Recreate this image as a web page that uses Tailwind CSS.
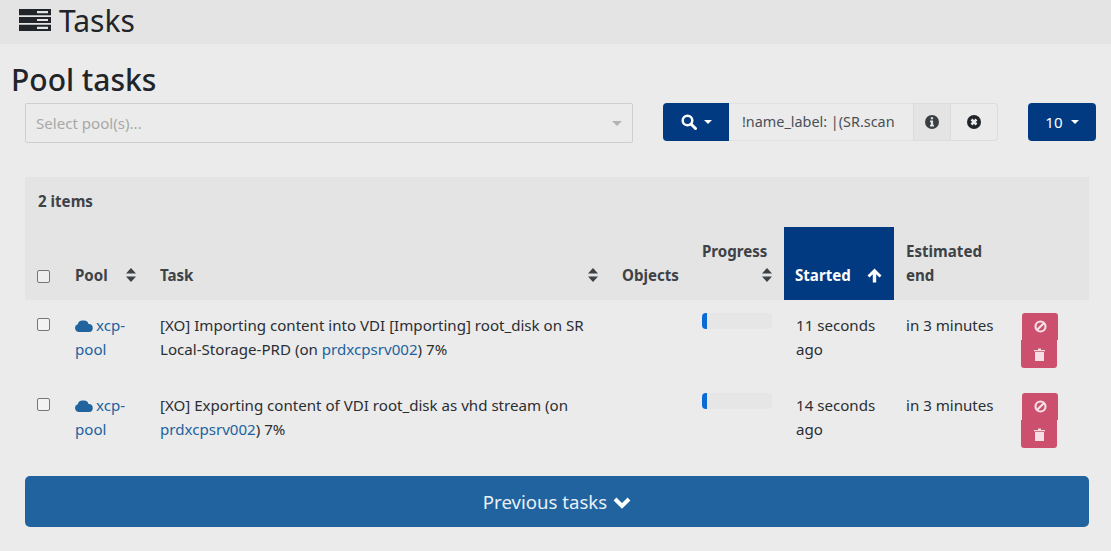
<!DOCTYPE html>
<html lang="en">
<head>
<meta charset="utf-8">
<title>Tasks</title>
<script src="https://cdn.jsdelivr.net/npm/@tailwindcss/browser@4"></script>
</head>
<body class="w-[1111px] h-[551px] overflow-hidden bg-[#ebebeb] text-[#2a2e33] font-['Noto_Sans','Open_Sans',sans-serif] text-[15.1px] leading-[24px]">

<!-- Page header -->
<header class="h-[44px] bg-[#e4e4e4] flex items-center pl-[19px] gap-[8px]">
    <svg class="w-[32px] h-[22px] -mt-[4px]" viewBox="0 0 32 22" fill="#212529">
        <path d="M0 0h32v6.200H0zM0 7.900h32v6.200H0zM0 15.800h32v6.200H0z"/>
        <path fill="#e4e4e4" d="M18 2h11v2.200H18zM18 9.900h11v2.200H18zM18 17.800h11v2.200H18z"/>
    </svg>
    <h1 class="text-[30px] leading-[40px] -mt-[3px] text-[#212529]">Tasks</h1>
</header>

<main class="px-[11px]">
    <h2 class="text-[30px] leading-[40px] mt-[16px] font-medium text-[#212529]">Pool tasks</h2>

    <!-- Filters -->
    <div class="flex items-start mt-[3px] ml-[14px]">
        <div class="w-[608px] h-[40px] border border-[#cfcfcf] rounded-[2px] flex items-center justify-between pl-[10px] pr-[10px] text-[#a8a8a8]">
            <span>Select pool(s)...</span>
            <span class="border-x-[5px] border-x-transparent border-t-[5px] border-t-[#b3b3b3]"></span>
        </div>
        <div class="flex ml-[30px] h-[38px]">
            <button class="w-[66px] bg-[#023a82] rounded-l-[4px] flex items-center justify-center gap-[7px] text-white">
                <svg class="w-[16px] h-[16px]" viewBox="0 0 16 16" fill="none" stroke="#fff"><circle cx="6.500" cy="6.500" r="4.800" stroke-width="2.500"/><path d="M10 10l4.500 4.500" stroke-width="3" stroke-linecap="round"/></svg>
                <span class="border-x-[4px] border-x-transparent border-t-[4px] border-t-white"></span>
            </button>
            <div class="w-[184px] border-y border-[#e0e0e0] flex items-center pl-[13px] text-[14.4px] text-[#495057] overflow-hidden whitespace-nowrap">!name_label: |(SR.scan</div>
            <div class="w-[38px] bg-[#e4e4e4] border border-[#dcdcdc] flex items-center justify-center">
                <svg class="w-[14px] h-[14px]" viewBox="0 0 14 14"><circle cx="7" cy="7" r="7" fill="#3a3f44"/><path fill="#e4e4e4" d="M5.800 2.300h2.300v2H5.800zM5 5.500h3.100v4.300h.9v1.700H5V9.800h.9V7.200H5z"/></svg>
            </div>
            <div class="w-[47px] border border-l-0 border-[#dcdcdc] rounded-r-[4px] flex items-center justify-center">
                <svg class="w-[14px] h-[14px]" viewBox="0 0 14 14"><circle cx="7" cy="7" r="7" fill="#212529"/><path stroke="#ebebeb" stroke-width="2.600" d="M4.500 4.500l5 5M9.500 4.500l-5 5"/></svg>
            </div>
        </div>
        <button class="w-[68px] h-[38px] ml-[30px] bg-[#023a82] rounded-[4px] flex items-center justify-center gap-[8px] text-white">
            10 <span class="border-x-[4px] border-x-transparent border-t-[4px] border-t-white"></span>
        </button>
    </div>

    <!-- Tasks table -->
    <div class="ml-[14px] mt-[34px] w-[1064px]">
        <div class="h-[50px] bg-[#e4e4e4] flex items-center pl-[13px] pb-[2px] font-bold text-[#3d4247]">2 items</div>
        <table class="w-full table-fixed border-collapse">
            <colgroup>
                <col class="w-[38px]"><col class="w-[85px]"><col class="w-[462px]"><col class="w-[80px]"><col class="w-[94px]"><col class="w-[110px]"><col class="w-[116px]"><col class="w-[79px]">
            </colgroup>
            <thead>
                <tr class="h-[73px] bg-[#e4e4e4] text-[#3d4247] text-left align-bottom font-bold">
                    <th class="pl-[12px] pb-[12px]"><input type="checkbox" class="block w-[13px] h-[13px] mb-[5px] appearance-none border border-[#767676] rounded-[2px] bg-white/40"></th>
                    <th class="pl-[12px] pb-[13px] pr-[12px]"><div class="flex justify-between items-center">Pool <svg class="w-[10px] h-[14px]" viewBox="0 0 10 14" fill="#3d4247"><path d="M5 0l5 5.500H0zM5 14L0 8.500h10z"/></svg></div></th>
                    <th class="pl-[12px] pb-[13px] pr-[12px]"><div class="flex justify-between items-center">Task <svg class="w-[10px] h-[14px]" viewBox="0 0 10 14" fill="#3d4247"><path d="M5 0l5 5.500H0zM5 14L0 8.500h10z"/></svg></div></th>
                    <th class="pl-[12px] pb-[13px]">Objects</th>
                    <th class="pl-[12px] pr-[12px] pb-[13px]">Progress<div class="flex justify-end items-center h-[24px]"><svg class="w-[10px] h-[14px]" viewBox="0 0 10 14" fill="#3d4247"><path d="M5 0l5 5.500H0zM5 14L0 8.500h10z"/></svg></div></th>
                    <th class="pl-[11px] pr-[12px] pb-[13px] bg-[#023a82] text-white"><div class="flex justify-between items-center">Started <svg class="w-[15px] h-[15px]" viewBox="0 0 15 15" fill="#fff"><path d="M7.500 0.500l7 7-2 2-3.300-3.300V14.500H5.800V6.200L2.500 9.500l-2-2z"/></svg></div></th>
                    <th class="pl-[12px] pr-[24px] pb-[13px]">Estimated end</th>
                    <th></th>
                </tr>
            </thead>
            <tbody class="align-top">
                <tr class="h-[80px]">
                    <td class="pl-[12px] pt-[13px]"><input type="checkbox" class="block w-[13px] h-[13px] mt-[5px] appearance-none border border-[#767676] rounded-[2px] bg-white/40"></td>
                    <td class="pl-[12px] pr-[12px] pt-[13px] text-[#20639f]"><svg class="inline w-[18px] h-[13px] mr-[3px] mt-[-3px]" viewBox="0 0 18 13" fill="#20639f"><path d="M4 13a4 4 0 0 1-1.200-7.800A4.500 4.500 0 0 1 8 1.500 4.600 4.600 0 0 1 13.500 5a4 4 0 0 1 .5 8z"/></svg>xcp-pool</td>
                    <td class="pl-[12px] pr-[12px] pt-[13px]">[XO] Importing content into VDI [Importing] root_disk on SR Local-Storage-PRD (on <span class="text-[#20639f]">prdxcpsrv002</span>) 7%</td>
                    <td></td>
                    <td class="pl-[12px] pr-[12px] pt-[13px]"><div class="h-[16px] w-[70px] rounded-[4px] bg-[#e6e6e6] overflow-hidden"><div class="h-full w-[7%] bg-[#0b6bd6]"></div></div></td>
                    <td class="pl-[12px] pr-[12px] pt-[13px]">11 seconds ago</td>
                    <td class="pl-[12px] pt-[13px]">in 3 minutes</td>
                    <td class="pl-[12px] pt-[13px]">
                        <button class="flex w-[36px] h-[27px] bg-[#cd4f6e] rounded-t-[3px] items-center justify-center"><svg class="w-[13px] h-[13px]" viewBox="0 0 13 13" fill="none" stroke="#f5dfe4" stroke-width="2.200"><circle cx="6.500" cy="6.500" r="5"/><path d="M3 10l7-7"/></svg></button>
                        <button class="flex w-[36px] h-[28px] -ml-[1px] bg-[#cd4f6e] rounded-b-[3px] items-center justify-center"><svg class="w-[11px] h-[13px]" viewBox="0 0 11 13" fill="#f5dfe4"><path d="M0 2h4V.5h3V2h4v1.300H0zM1 4h9v9H1z"/></svg></button>
                    </td>
                </tr>
                <tr class="h-[80px]">
                    <td class="pl-[12px] pt-[13px]"><input type="checkbox" class="block w-[13px] h-[13px] mt-[5px] appearance-none border border-[#767676] rounded-[2px] bg-white/40"></td>
                    <td class="pl-[12px] pr-[12px] pt-[13px] text-[#20639f]"><svg class="inline w-[18px] h-[13px] mr-[3px] mt-[-3px]" viewBox="0 0 18 13" fill="#20639f"><path d="M4 13a4 4 0 0 1-1.200-7.800A4.500 4.500 0 0 1 8 1.500 4.600 4.600 0 0 1 13.500 5a4 4 0 0 1 .5 8z"/></svg>xcp-pool</td>
                    <td class="pl-[12px] pr-[12px] pt-[13px]">[XO] Exporting content of VDI root_disk as vhd stream (on <span class="text-[#20639f]">prdxcpsrv002</span>) 7%</td>
                    <td></td>
                    <td class="pl-[12px] pr-[12px] pt-[13px]"><div class="h-[16px] w-[70px] rounded-[4px] bg-[#e6e6e6] overflow-hidden"><div class="h-full w-[7%] bg-[#0b6bd6]"></div></div></td>
                    <td class="pl-[12px] pr-[12px] pt-[13px]">14 seconds ago</td>
                    <td class="pl-[12px] pt-[13px]">in 3 minutes</td>
                    <td class="pl-[12px] pt-[13px]">
                        <button class="flex w-[36px] h-[27px] bg-[#cd4f6e] rounded-t-[3px] items-center justify-center"><svg class="w-[13px] h-[13px]" viewBox="0 0 13 13" fill="none" stroke="#f5dfe4" stroke-width="2.200"><circle cx="6.500" cy="6.500" r="5"/><path d="M3 10l7-7"/></svg></button>
                        <button class="flex w-[36px] h-[28px] -ml-[1px] bg-[#cd4f6e] rounded-b-[3px] items-center justify-center"><svg class="w-[11px] h-[13px]" viewBox="0 0 11 13" fill="#f5dfe4"><path d="M0 2h4V.5h3V2h4v1.300H0zM1 4h9v9H1z"/></svg></button>
                    </td>
                </tr>
            </tbody>
        </table>

        <button class="w-full h-[51px] mt-[16px] pt-[1px] bg-[#20639f] rounded-[5px] flex items-center justify-center gap-[6px] text-[#e9f0f7] text-[18.6px]">
            Previous tasks
            <svg class="w-[18px] h-[13px]" viewBox="0 0 18 13" fill="none" stroke="#fff" stroke-width="4"><path d="M2 3l7 7 7-7"/></svg>
        </button>
    </div>
</main>
</body>
</html>
